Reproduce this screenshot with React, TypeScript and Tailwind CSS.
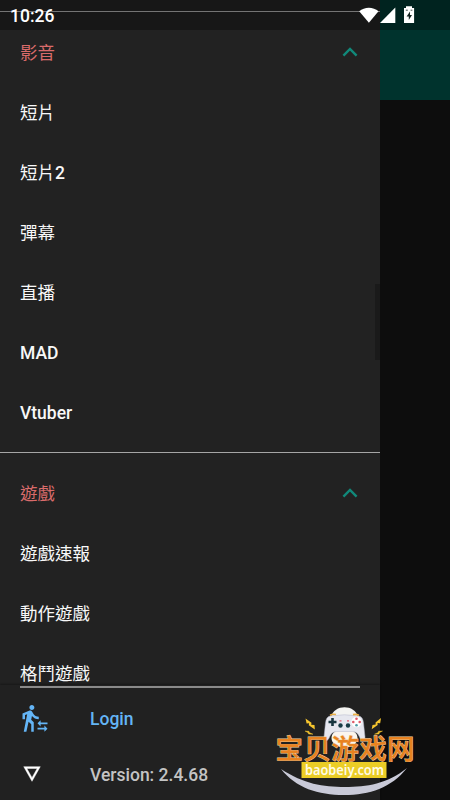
import { useState } from 'react';

interface MenuSection {
    title: string;
    items: string[];
}

const sections: MenuSection[] = [
    { title: '影音', items: ['短片', '短片2', '彈幕', '直播', 'MAD', 'Vtuber'] },
    { title: '遊戲', items: ['遊戲速報', '動作遊戲', '格鬥遊戲'] },
];

// Latin runs are set heavier than the Chinese glyphs
function Label({ text }: { text: string }) {
    return (
        <span className="font-normal">
            {text.split(/([A-Za-z0-9]+)/).filter(Boolean).map((part, i) => (
                <span key={i} className={/^[A-Za-z0-9]/.test(part) ? 'font-[550]' : ''}>{part}</span>
            ))}
        </span>
    );
}

function StatusBar() {
    return (
        <div className="absolute inset-x-0 top-0 z-20 flex h-[30px] items-center bg-black/30 pl-[10px] pr-[34px]">
            <span className="mt-[3px] flex-1 text-[17.5px] font-medium leading-none text-white">10:26</span>
            <svg className="h-[18px] w-[57px]" viewBox="0 0 57 18" fill="#fff">
                <path d="M0.2 5.3C5.5 0.4 14.2 0.4 19.5 5.3L9.9 16.8z" />
                <path d="M21 16.9L36.3 1.4v15.5z" />
                <path d="M47 0.2h6v1.7h2.1v15H45v-15h2z" />
                <path d="M51 5.6l-3.4 4.8h2.2v3.6l3.2-5h-2z" fill="#142320" />
                <path d="M46.8 4.2h2M51.6 4.2h1.8" stroke="#142320" strokeWidth="0.8" />
            </svg>
        </div>
    );
}

function Section({ section }: { section: MenuSection }) {
    const [open, setOpen] = useState(true);

    return (
        <section className="border-t border-[#a6a6a6] py-[10px]">
            <button
                type="button"
                className="flex h-[60px] w-full items-center justify-between pl-5 pr-[22px] pt-[3px] text-[#d96b6b]"
                onClick={() => setOpen(!open)}
            >
                <Label text={section.title} />
                <svg className={open ? 'mb-[3px] h-4 w-4' : 'mb-[3px] h-4 w-4 rotate-180'} viewBox="0 0 16 16" fill="none" stroke="#11897a" strokeWidth="2.4">
                    <path d="M1.4 11.6L8 5l6.6 6.6" />
                </svg>
            </button>
            {open && section.items.map(item => (
                <div key={item} className="flex h-[60px] items-center px-5 pt-[3px] text-[#f8f8f8]">
                    <Label text={item} />
                </div>
            ))}
        </section>
    );
}

function Footer() {
    return (
        <footer className="relative h-[115px] shrink-0 bg-[#212121] pl-5 shadow-[0_-1px_2px_rgba(0,0,0,0.35)]">
            <div className="mr-5 mt-px h-[1.5px] bg-[#8a8a8a]" />
            <div className="flex h-[62px] items-center text-[#64b5f6]">
                <svg className="mb-px h-[30px] w-[30px]" viewBox="0 0 24 24" fill="currentColor">
                    <path d="M16.49 15.5v-1.75L14 16.25l2.49 2.5V17H22v-1.5zM19.51 19.75H14v1.5h5.51V23L22 20.5 19.51 18zM9.5 5.5c1.1 0 2-.9 2-2s-.9-2-2-2-2 .9-2 2 .9 2 2 2zM5.75 8.9L3 23h2.1l1.75-8L9 17v6h2v-7.55L8.95 13.4l.6-3C10.85 12 12.8 13 15 13v-2c-1.85 0-3.45-1-4.35-2.45l-.95-1.6C9.35 6.35 8.7 6 8 6c-.25 0-.5.05-.75.15L2 8.3V13h2V9.65z" />
                </svg>
                <span className="ml-10 mt-[3px]">Login</span>
            </div>
            <div className="flex h-[50px] items-center text-[#c4c4c4]">
                <svg className="mb-px ml-px h-[22px] w-[22px]" viewBox="0 0 24 24" fill="#fff">
                    <path d="M3 4l9 16 9-16H3zm3.38 2h11.25L12 16 6.38 6z" stroke="#fff" strokeWidth="0.5" />
                </svg>
                <span className="ml-[47px] mt-[2px]">Version: 2.4.68</span>
            </div>
        </footer>
    );
}

function SiteMark() {
    return (
        <svg className="absolute left-[270px] top-[700px] z-30 h-[100px] w-[150px]" viewBox="0 0 150 100">
            <path d="M11 69C34 84 53 87 75 87S117 84 137 68C121 88 100 95 74 95S26 88 11 69z" fill="#c9cad8" />
            {/* controller */}
            <path d="M61 17C64 4 85 4 88 17z" fill="#f4f4f2" />
            <ellipse cx="74.5" cy="38" rx="13" ry="9.5" fill="#fbf5ee" />
            <path
                d="M60 16Q74.5 13.5 89 16Q93 17 93.5 23L95 37Q95 41 92 40.5Q90.5 40 89 36Q87 31.5 82 31.5H67Q62 31.5 60 36Q58.5 40 57 40.5Q54 41 54 37L55.5 23Q56 17 60 16z"
                fill="#e6e7ef"
                stroke="#b4b7c8"
                strokeWidth="0.5"
            />
            <path d="M60 15.2q3-1.5 6-.6M83 14.6q3-.7 6 .6" fill="none" stroke="#e9ae45" strokeWidth="1.6" />
            <path d="M62.5 18v8M58.5 22h8" stroke="#18353f" strokeWidth="2.6" />
            <circle cx="86.5" cy="22" r="5.2" fill="#fff" />
            <circle cx="86.5" cy="18.8" r="1.3" fill="#df5968" />
            <circle cx="89.7" cy="22" r="1.3" fill="#df5968" />
            <circle cx="86.5" cy="25.2" r="1.3" fill="#4e9ba8" />
            <circle cx="83.3" cy="22" r="1.3" fill="#df5968" />
            <circle cx="70.5" cy="25.5" r="2.2" fill="#183b45" />
            <circle cx="78" cy="25.5" r="2.2" fill="#183b45" />
            <path d="M69.5 20.8h2M77 20.8h2" stroke="#df5d70" strokeWidth="1.2" />
            {/* sparks */}
            <path d="M35.5 18.5l6 4.3-.3 2 3.3.2.3 4.5-6-4.3.3-2-2.5.2z" fill="#f6c52e" />
            <path d="M111 18l-5.5 4.5.2 2-3.2.4-.8 4.4 6-4.2-.2-2 2.7.1z" fill="#f6c52e" />
            <path d="M35 31l4 .3.3 1.2 3.7 1.7-4.5-.2-.3-1.2zM112.5 31l-4 .3-.3 1.2-3.7 1.7 4.5-.2.3-1.2z" fill="#f6c52e" stroke="#f6c52e" strokeWidth="0.4" />
            <text
                x="5.5"
                y="59.2"
                textLength="139"
                fontSize="27.5"
                fontWeight="500"
                fill="#e88220"
                stroke="#f0d0a0"
                strokeWidth="0.9"
                paintOrder="stroke"
                className="font-['Noto_Sans_CJK_SC',sans-serif]"
            >宝贝游戏网</text>
            <rect x="31.5" y="62" width="85" height="16" fill="#ebcd26" />
            <text x="35" y="74.5" textLength="79" lengthAdjust="spacingAndGlyphs" fontSize="14" fontWeight="600" fill="#fffbe5" className="font-['Noto_Sans',sans-serif]">baobeiy.com</text>
        </svg>
    );
}

export default function App() {
    return (
        <div className="relative h-[800px] w-[450px] overflow-hidden bg-[#0d0d0d] font-[Roboto,'Noto_Sans_CJK_TC',sans-serif] text-[17.5px] font-medium leading-none">
            <div className="flex h-full">
                <aside className="relative flex w-[380px] flex-col bg-[#222222]">
                    <div className="min-h-0 flex-1 overflow-hidden pt-[11px]">
                        {sections.map(section => <Section key={section.title} section={section} />)}
                    </div>
                    <div className="absolute right-0 top-[284px] h-[76px] w-[5px] bg-[#1a1a1a]" />
                    <Footer />
                </aside>
                <div className="h-[100px] flex-1 bg-[#00332d]" />
            </div>
            <StatusBar />
            <SiteMark />
        </div>
    );
}
